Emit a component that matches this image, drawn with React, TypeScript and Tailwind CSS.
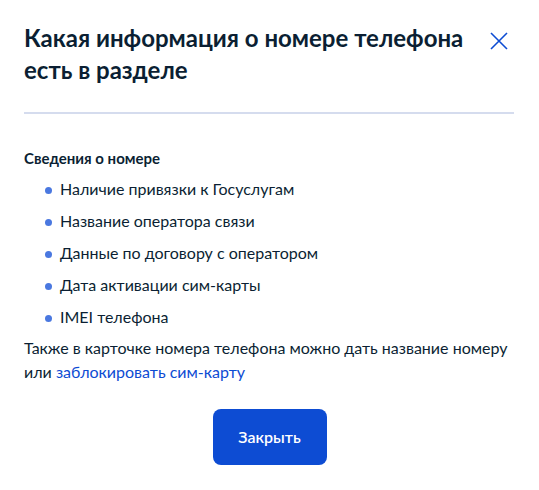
import React from "react";

const items = [
  "Наличие привязки к Госуслугам",
  "Название оператора связи",
  "Данные по договору с оператором",
  "Дата активации сим-карты",
  "IMEI телефона",
];

export default function App() {
  return (
    <div className="w-[539px] h-[490px] bg-white text-[#0b1f33] font-['Lato','Noto_Sans',sans-serif] px-6 pt-[22px]">
      <div className="flex items-start justify-between">
        <h2 className="text-[24px] leading-8 font-bold w-[450px]">
          Какая информация о номере телефона есть в разделе
        </h2>
        <button className="mt-[10px] mr-[7px] w-[18px] h-[18px] flex items-center justify-center text-[#0d4cd3]">
          <svg width="18" height="18" viewBox="0 0 18 18" fill="none" stroke="currentColor" strokeWidth="1.6">
            <path d="M1 1L17 17M17 1L1 17" />
          </svg>
        </button>
      </div>
      <div className="mt-[26px] h-[2px] w-[490px] bg-[#d5dcee]" />
      <h3 className="mt-8 text-[15px] leading-6 font-bold">Сведения о номере</h3>
      <ul className="mt-[7px] flex flex-col gap-2 pl-[21px]">
        {items.map((t) => (
          <li key={t} className="flex items-center text-base leading-6">
            <span className="w-[7px] h-[7px] shrink-0 rounded-full bg-[#4a78e0] mt-[2px]" />
            <span className="ml-[8px]">{t}</span>
          </li>
        ))}
      </ul>
      <p className="mt-[7px] text-base leading-6">
        Также в карточке номера телефона можно дать название номеру или{" "}
        <span className="text-[#0d4cd3]">заблокировать сим-карту</span>
      </p>
      <div className="flex justify-center mt-[25px]">
        <button className="w-[114px] h-[56px] rounded-lg bg-[#0d4cd3] text-white text-base font-semibold">
          Закрыть
        </button>
      </div>
    </div>
  );
}
